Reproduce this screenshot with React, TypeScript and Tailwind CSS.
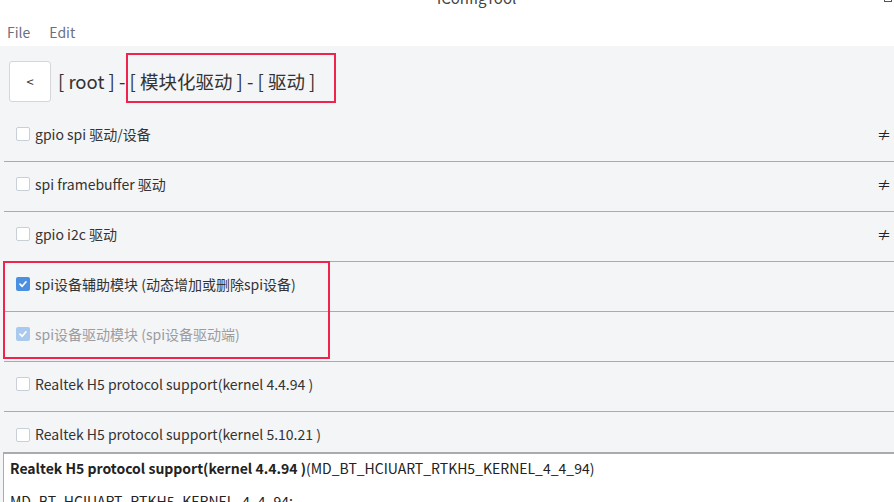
import React from 'react';

type Row = { label: string; checked?: boolean; disabled?: boolean; neq?: boolean };

const rows: Row[] = [
  { label: 'gpio spi 驱动/设备', neq: true },
  { label: 'spi framebuffer 驱动', neq: true },
  { label: 'gpio i2c 驱动', neq: true },
  { label: 'spi设备辅助模块 (动态增加或删除spi设备)', checked: true },
  { label: 'spi设备驱动模块 (spi设备驱动端)', checked: true, disabled: true },
  { label: 'Realtek H5 protocol support(kernel 4.4.94 )' },
  { label: 'Realtek H5 protocol support(kernel 5.10.21 )' },
];

function Check({ checked, disabled }: { checked?: boolean; disabled?: boolean }) {
  if (!checked) {
    return <span className="block h-[14px] w-[14px] shrink-0 rounded-[2px] border border-[#c9cfd8] bg-white" />;
  }
  return (
    <span
      className={`flex h-[14px] w-[14px] shrink-0 items-center justify-center rounded-[2px] ${
        disabled ? 'bg-[#a9c9ef]' : 'bg-[#4a8fe0]'
      }`}
    >
      <svg width="10" height="10" viewBox="0 0 10 10">
        <path d="M2 5.2 L4.2 7.3 L8 2.8" fill="none" stroke="white" strokeWidth="1.7" strokeLinecap="round" strokeLinejoin="round" />
      </svg>
    </span>
  );
}

export default function App() {
  return (
    <div
      className="relative flex h-[502px] w-[894px] flex-col overflow-hidden bg-white text-[#333]"
      style={{ fontFamily: '"Noto Sans CJK SC", "Noto Sans", sans-serif' }}
    >
      {/* title bar */}
      <div className="relative h-[20px] shrink-0">
        <div className="absolute left-[437px] top-[-12px] text-[15px] leading-[20px] text-[#444]">iConfigTool</div>
        <div className="absolute right-[2px] top-[-6px] h-[8px] w-[8px] border border-[#555]" />
      </div>

      {/* menu */}
      <div className="flex h-[26px] shrink-0 items-center gap-[19px] pb-[2px] pl-[7px] text-[14px] text-[#6b6f80]">
        <span>File</span>
        <span>Edit</span>
      </div>

      <div className="flex flex-1 flex-col bg-[#f4f5f7]">
        {/* breadcrumb */}
        <div className="relative flex h-[66px] shrink-0 items-center pb-[1px] pl-[9px] pt-[6px]">
          <button className="flex h-[41px] w-[42px] items-center justify-center rounded-[3px] border border-[#d4d6da] bg-white text-[13px] text-[#333]">
            &lt;
          </button>
          <span className="ml-[7px] text-[18.5px] text-[#333]">[ root ] - [ 模块化驱动 ] - [ 驱动 ]</span>
          <div className="pointer-events-none absolute left-[126px] top-[7px] h-[50px] w-[210px] border-2 border-[#f0234f]" />
        </div>

        {/* list */}
        <div className="relative flex h-[340px] shrink-0 flex-col overflow-hidden">
          {rows.map((r, i) => (
            <div
              key={i}
              className={`ml-[4px] flex h-[50px] shrink-0 items-center pb-[5px] pl-[12px] pr-[3px] ${
                i < rows.length - 1 ? 'border-b border-[#a9abae]' : ''
              }`}
            >
              <Check checked={r.checked} disabled={r.disabled} />
              <span className={`ml-[5px] text-[14px] ${r.disabled ? 'text-[#9a9ca0]' : 'text-[#333]'}`}>{r.label}</span>
              {r.neq && <span className="ml-auto text-[14px] text-[#222]">≠</span>}
            </div>
          ))}
          <div className="pointer-events-none absolute left-[3px] top-[149px] h-[98px] w-[327px] border-2 border-[#f0234f]" />
        </div>

        {/* info panel */}
        <div className="ml-[3px] flex-1 border-l border-t-2 border-[#a9abae] bg-white pl-[6px] pt-[4px]">
          <div className="text-[14px] text-[#222]">
            <span className="font-bold">Realtek H5 protocol support(kernel 4.4.94 )</span>(MD_BT_HCIUART_RTKH5_KERNEL_4_4_94)
          </div>
          <div className="mt-[12px] text-[14px] text-[#222]">MD_BT_HCIUART_RTKH5_KERNEL_4_4_94:</div>
        </div>
      </div>
    </div>
  );
}
